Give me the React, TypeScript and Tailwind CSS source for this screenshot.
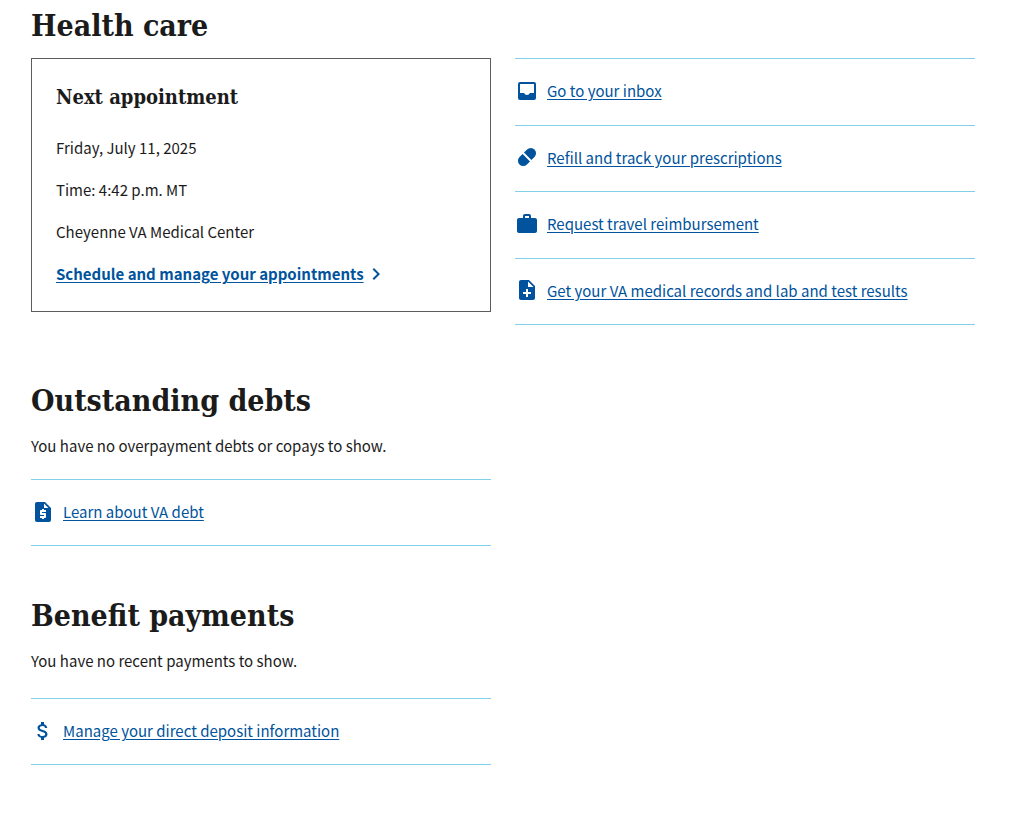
import type { ReactNode } from "react";
import { MdAttachMoney, MdNavigateNext, MdNoteAdd, MdRequestQuote, MdWork } from "react-icons/md";

function InboxIcon() {
  return (
    <svg viewBox="0 0 24 24" width="24" height="24" fill="currentColor" aria-hidden="true">
      <path
        d="M5 3h14a2 2 0 0 1 2 2v14a2 2 0 0 1-2 2H5a2 2 0 0 1-2-2V5a2 2 0 0 1 2-2zm0 2v9h4.1c.5 1.2 1.6 2 2.9 2s2.400-.8 2.900-2H19V5z"
        fillRule="evenodd"
      />
    </svg>
  );
}

function PillIcon() {
  return (
    <svg viewBox="0 0 24 24" width="24" height="24" fill="currentColor" aria-hidden="true">
      <path d="M7.600 9 15 16.400 11.900 19.500A5.230 5.230 0 0 1 4.500 12.100z" />
      <path d="M9 7.600 12.100 4.500A5.230 5.230 0 0 1 19.500 11.900L16.400 15z" />
    </svg>
  );
}

function Heading({ children }: { children: ReactNode }) {
  return (
    <h2 className="mb-3 font-['DejaVu_Serif_Condensed','DejaVu_Serif',serif] text-3xl leading-10 font-bold">
      {children}
    </h2>
  );
}

function LinkRow({ icon, children }: { icon: ReactNode; children: ReactNode }) {
  return (
    <li className="flex items-center gap-2 border-t border-[#82cfe8] pt-[19px] pb-[21px] text-[#00539c]">
      <span className="shrink-0">{icon}</span>
      <a href="#" className="leading-[25px] underline underline-offset-2">
        {children}
      </a>
    </li>
  );
}

export default function App() {
  return (
    <main className="bg-white pt-1.5 pr-[51px] pb-12 pl-[31px] font-['Noto_Sans_CJK_JP',sans-serif] text-[15px] leading-[26px] text-[#1b1b1b]">
      <section>
        <Heading>Health care</Heading>
        <div className="grid grid-cols-2 items-start gap-6">
          <div className="border border-[#5c5c5c] p-6">
            <h3 className="mb-6 font-['DejaVu_Serif_Condensed','DejaVu_Serif',serif] text-xl leading-7 font-bold">
              Next appointment
            </h3>
            <div className="flex flex-col gap-4">
              <p>Friday, July 11, 2025</p>
              <p>Time: 4:42 p.m. MT</p>
              <p>Cheyenne VA Medical Center</p>
              <a href="#" className="flex items-center font-bold text-[#00539c]">
                <span className="underline underline-offset-2">Schedule and manage your appointments</span>
                <MdNavigateNext size={24} aria-hidden="true" />
              </a>
            </div>
          </div>
          <ul className="grid min-h-[267px] auto-rows-fr border-b border-[#82cfe8]">
            <LinkRow icon={<InboxIcon />}>Go to your inbox</LinkRow>
            <LinkRow icon={<PillIcon />}>Refill and track your prescriptions</LinkRow>
            <LinkRow icon={<MdWork size={24} />}>Request travel reimbursement</LinkRow>
            <LinkRow icon={<MdNoteAdd size={24} />}>Get your VA medical records and lab and test results</LinkRow>
          </ul>
        </div>
      </section>

      <div className="grid grid-cols-2 gap-6">
        <div>
          <section className="mt-14">
            <Heading>Outstanding debts</Heading>
            <p>You have no overpayment debts or copays to show.</p>
            <ul className="mt-5 border-b border-[#82cfe8]">
              <LinkRow icon={<MdRequestQuote size={24} />}>Learn about VA debt</LinkRow>
            </ul>
          </section>
          <section className="mt-[50px]">
            <Heading>Benefit payments</Heading>
            <p>You have no recent payments to show.</p>
            <ul className="mt-6 border-b border-[#82cfe8]">
              <LinkRow icon={<MdAttachMoney size={24} />}>Manage your direct deposit information</LinkRow>
            </ul>
          </section>
        </div>
      </div>
    </main>
  );
}
